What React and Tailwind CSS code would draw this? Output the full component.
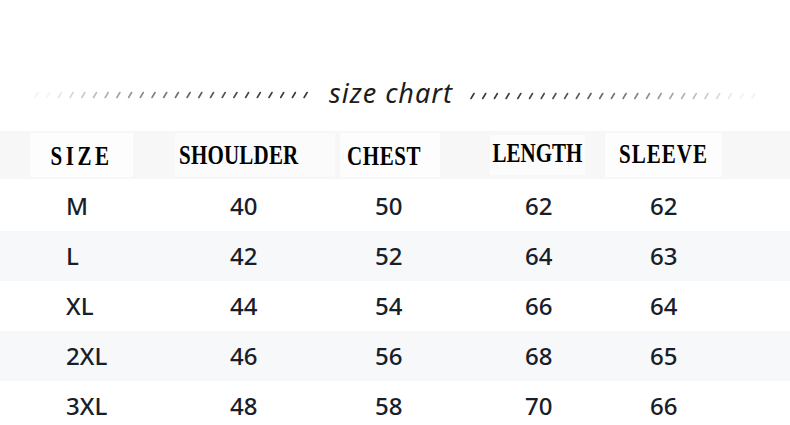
import React from 'react';

const rows = [
  ['M', '40', '50', '62', '62'],
  ['L', '42', '52', '64', '63'],
  ['XL', '44', '54', '66', '64'],
  ['2XL', '46', '56', '68', '65'],
  ['3XL', '48', '58', '70', '66'],
];

// slanted dashes that fade away from the title
function Dashes({ width, count, fadeRight }) {
  const marks = [];
  for (let i = 0; i < count; i++) {
    const x = 2 + i * 11.7;
    const t = fadeRight ? i / (count - 1) : 1 - i / (count - 1);
    const op = Math.max(0.05, 0.95 - t * t * 0.9 - t * 0.1);
    marks.push(
      <line key={i} x1={x} y1={7.5} x2={x + 3} y2={2.5} stroke="#2e2e2e" strokeWidth="1.6" strokeLinecap="round" opacity={op} />
    );
  }
  return (
    <svg width={width} height="10" viewBox={`0 0 ${width} 10`}>
      {marks}
    </svg>
  );
}

export default function App() {
  return (
    <div className="w-[790px] h-[425px] bg-white overflow-hidden font-['Noto_Sans',sans-serif]">
      <div className="h-[131px] pt-[74px]">
        <div className="h-[36px] flex items-center">
          <div className="ml-[33px] mt-[6px]">
            <Dashes width={282} count={24} fadeRight={false} />
          </div>
          <span className="ml-[14px] text-[27px] italic tracking-[1px] text-[#1c1c1c] font-['Noto_Sans',sans-serif] leading-none">
            size chart
          </span>
          <div className="ml-[16px] mt-[8px]">
            <Dashes width={290} count={25} fadeRight={true} />
          </div>
        </div>
      </div>

      <div className="h-[48px] bg-[#f7f7f7] flex items-center font-['Liberation_Serif',serif] font-bold text-[21px] text-black">
        <div className="ml-[30px] w-[103px] h-[44px] bg-[#fdfdfd] flex items-center justify-center">
          <span className="scale-y-125 tracking-[3.5px] mt-[3px]">SIZE</span>
        </div>
        <div className="ml-[42px] w-[160px] h-[44px] bg-[#fbfbfb] flex items-center pl-[4px]">
          <span className="scale-y-125 tracking-[0.2px] mt-[1px]">SHOULDER</span>
        </div>
        <div className="ml-[5px] w-[100px] h-[44px] bg-[#fdfdfd] flex items-center pl-[7px]">
          <span className="scale-y-125 tracking-[0.6px] mt-[3px]">CHEST</span>
        </div>
        <div className="ml-[50px] w-[95px] h-[40px] bg-[#fcfcfc] flex items-center justify-center">
          <span className="scale-y-125 -mt-[3px]">LENGTH</span>
        </div>
        <div className="ml-[20px] w-[117px] h-[44px] bg-[#fdfdfd] flex items-center justify-center">
          <span className="scale-y-125 tracking-[1px] -mt-[1px]">SLEEVE</span>
        </div>
      </div>

      {rows.map((r, i) => (
        <div
          key={r[0]}
          className={`flex items-center text-[24px] font-medium text-[#17202a] ${i % 2 === 1 ? 'bg-[#f7f8f9]' : 'bg-white'} ${i === 0 ? 'h-[52px] pt-[2px]' : 'h-[50px]'}`}
        >
          <div className="ml-[66px] w-[164px]">{r[0]}</div>
          <div className="w-[145px]">{r[1]}</div>
          <div className="w-[150px]">{r[2]}</div>
          <div className="w-[125px]">{r[3]}</div>
          <div>{r[4]}</div>
        </div>
      ))}
    </div>
  );
}
